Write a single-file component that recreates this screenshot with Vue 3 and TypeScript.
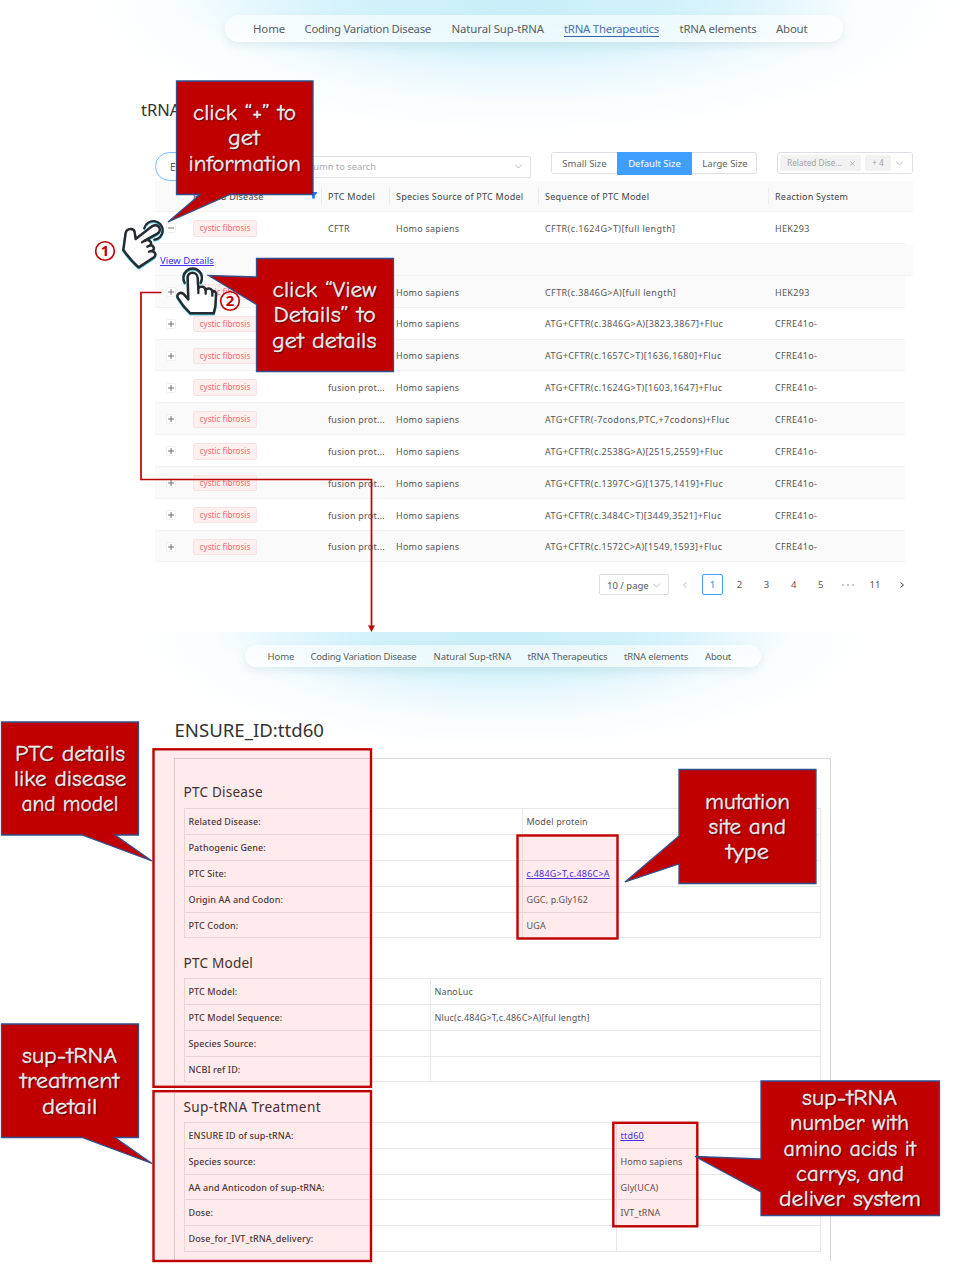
<script setup lang="ts">
interface Row { model: string; sequence: string; system: string }
interface Line { text: string; x: number; y: number; w: number }
interface Callout { shape: string; lines: Line[] }
interface Detail { label: string; value: string; link?: boolean }
interface Section { title: string; kind: string; rows: Detail[] }

const nav = ['Home', 'Coding Variation Disease', 'Natural Sup-tRNA', 'tRNA Therapeutics', 'tRNA elements', 'About']
const navKeys = ['home', 'coding', 'natural', 'therapy', 'elements', 'about']

const rows: Row[] = [
  { model: 'CFTR', sequence: 'CFTR(c.1624G>T)[full length]', system: 'HEK293' },
  { model: '', sequence: 'CFTR(c.3846G>A)[full length]', system: 'HEK293' },
  { model: '', sequence: 'ATG+CFTR(c.3846G>A)[3823,3867]+Fluc', system: 'CFRE41o-' },
  { model: '', sequence: 'ATG+CFTR(c.1657C>T)[1636,1680]+Fluc', system: 'CFRE41o-' },
  { model: 'fusion prot...', sequence: 'ATG+CFTR(c.1624G>T)[1603,1647]+Fluc', system: 'CFRE41o-' },
  { model: 'fusion prot...', sequence: 'ATG+CFTR(-7codons,PTC,+7codons)+Fluc', system: 'CFRE41o-' },
  { model: 'fusion prot...', sequence: 'ATG+CFTR(c.2538G>A)[2515,2559]+Fluc', system: 'CFRE41o-' },
  { model: 'fusion prot...', sequence: 'ATG+CFTR(c.1397C>G)[1375,1419]+Fluc', system: 'CFRE41o-' },
  { model: 'fusion prot...', sequence: 'ATG+CFTR(c.3484C>T)[3449,3521]+Fluc', system: 'CFRE41o-' },
  { model: 'fusion prot...', sequence: 'ATG+CFTR(c.1572C>A)[1549,1593]+Fluc', system: 'CFRE41o-' },
]

const sections: Section[] = [
  {
    title: 'PTC Disease', kind: 'disease', rows: [
      { label: 'Related Disease:', value: 'Model protein' },
      { label: 'Pathogenic Gene:', value: '' },
      { label: 'PTC Site:', value: 'c.484G>T,c.486C>A', link: true },
      { label: 'Origin AA and Codon:', value: 'GGC, p.Gly162' },
      { label: 'PTC Codon:', value: 'UGA' },
    ],
  },
  {
    title: 'PTC Model', kind: 'model', rows: [
      { label: 'PTC Model:', value: 'NanoLuc' },
      { label: 'PTC Model Sequence:', value: 'Nluc(c.484G>T,c.486C>A)[ful length]' },
      { label: 'Species Source:', value: '' },
      { label: 'NCBI ref ID:', value: '' },
    ],
  },
  {
    title: 'Sup-tRNA Treatment', kind: 'treatment', rows: [
      { label: 'ENSURE ID of sup-tRNA:', value: 'ttd60', link: true },
      { label: 'Species source:', value: 'Homo sapiens' },
      { label: 'AA and Anticodon of sup-tRNA:', value: 'Gly(UCA)' },
      { label: 'Dose:', value: 'IVT_tRNA' },
      { label: 'Dose_for_IVT_tRNA_delivery:', value: '' },
    ],
  },
]

const callouts: Callout[] = [
  {
    shape: 'M176.5 81H313V194.500H230L168 222L200 194.500H176.500Z',
    lines: [
      { text: 'click “+” to', x: 193, y: 120, w: 103 },
      { text: 'get', x: 228, y: 145, w: 32 },
      { text: 'information', x: 188.500, y: 170.500, w: 112.500 },
    ],
  },
  {
    shape: 'M256.500 258.500H393.500V371.500H256.500V304.500L208.500 275.500L256.500 277Z',
    lines: [
      { text: 'click “View', x: 272.500, y: 297, w: 104 },
      { text: 'Details” to', x: 273.500, y: 322, w: 102.500 },
      { text: 'get details', x: 272, y: 347.500, w: 104.500 },
    ],
  },
  {
    shape: 'M1.500 722H138.500V835H115L152 861L82 835H1.500Z',
    lines: [
      { text: 'PTC details', x: 15, y: 760.500, w: 110 },
      { text: 'like disease', x: 14, y: 786, w: 112.500 },
      { text: 'and model', x: 21.500, y: 811, w: 97 },
    ],
  },
  {
    shape: 'M679 769.500H816V883.500H679V864L625 882L679 836Z',
    lines: [
      { text: 'mutation', x: 705, y: 809, w: 85 },
      { text: 'site and', x: 708.500, y: 834, w: 77.500 },
      { text: 'type', x: 726, y: 859, w: 43 },
    ],
  },
  {
    shape: 'M1.500 1024H138.500V1137.500H115L152 1163.500L82 1137.500H1.500Z',
    lines: [
      { text: 'sup-tRNA', x: 22, y: 1063, w: 95 },
      { text: 'treatment', x: 20, y: 1088, w: 99.500 },
      { text: 'detail', x: 42, y: 1113.500, w: 55.500 },
    ],
  },
  {
    shape: 'M761 1081H939.500V1215.500H761V1192L695 1156.500L761 1159Z',
    lines: [
      { text: 'sup-tRNA', x: 802, y: 1105, w: 95 },
      { text: 'number with', x: 790, y: 1130, w: 119 },
      { text: 'amino acids it', x: 783.500, y: 1155.500, w: 132.500 },
      { text: 'carrys, and', x: 796, y: 1180.500, w: 108 },
      { text: 'deliver system', x: 779, y: 1206, w: 142 },
    ],
  },
]
const pages = ['2', '3', '4', '5']
</script>

<template>
  <main class="board">
    <section class="page list-page">
      <nav class="nav">
        <a v-for="(item, i) in nav" :key="item" :class="[navKeys[i], { active: i === 3 }]">{{ item }}</a>
      </nav>
      <h1>tRNA</h1>
      <div class="toolbar">
        <button class="export">Ex</button>
        <div class="search">
          <span>Select column to search</span>
          <svg class="chev" viewBox="0 0 10 10"><path d="M1.500 3L5 6.800L8.500 3" /></svg>
        </div>
        <div class="sizes"><span>Small Size</span><span class="on">Default Size</span><span>Large Size</span></div>
        <div class="filter">
          <span class="chip wide">Related Dise...<svg viewBox="0 0 8 8"><path d="M1.500 1.500L6.500 6.500M6.500 1.500L1.500 6.500" /></svg></span>
          <span class="chip">+ 4</span>
          <svg class="chev" viewBox="0 0 10 10"><path d="M1.500 3L5 6.800L8.500 3" /></svg>
        </div>
      </div>

      <div class="grid head">
        <span></span>
        <span class="cell first">Related Disease<svg viewBox="0 0 8 8"><path d="M0 0H8V1.500L5.500 4V7.500H2.500V4L0 1.500Z" /></svg></span>
        <span class="cell">PTC Model</span>
        <span class="cell">Species Source of PTC Model</span>
        <span class="cell">Sequence of PTC Model</span>
        <span class="cell last">Reaction System</span>
      </div>
      <template v-for="(r, i) in rows" :key="i">
        <div class="grid row" :class="{ striped: i % 2 === 1 }">
          <span class="toggle"><svg viewBox="0 0 10 10"><path :d="i === 0 ? 'M2 5H8' : 'M2 5H8M5 2V8'" /></svg></span>
          <span><b class="tag">cystic fibrosis</b></span>
          <span class="model">{{ r.model }}</span>
          <span class="species">Homo sapiens</span>
          <span class="seq">{{ r.sequence }}</span>
          <span class="system">{{ r.system }}</span>
        </div>
        <div v-if="i === 0" class="expanded"><a>View Details</a></div>
      </template>

      <div class="pager">
        <span class="per">10 / page<svg class="chev" viewBox="0 0 10 10"><path d="M1.500 3L5 6.800L8.500 3" /></svg></span>
        <span class="item muted"><svg viewBox="0 0 8 8"><path d="M5.500 1.500L2.500 4L5.500 6.500" /></svg></span>
        <span class="item current">1</span>
        <span v-for="p in pages" :key="p" class="item">{{ p }}</span>
        <span class="item muted dots"><i></i><i></i><i></i></span>
        <span class="item">11</span>
        <span class="item"><svg viewBox="0 0 8 8"><path d="M2.500 1.500L5.500 4L2.500 6.500" /></svg></span>
      </div>
    </section>

    <section class="page detail-page">
      <nav class="nav small">
        <a v-for="(item, i) in nav" :key="item" :class="navKeys[i]">{{ item }}</a>
      </nav>
      <h2>ENSURE_ID:ttd60</h2>
      <div class="panel">
        <article v-for="s in sections" :key="s.title" :class="s.kind">
          <h3>{{ s.title }}</h3>
          <dl>
            <div v-for="d in s.rows" :key="d.label">
              <dt>{{ d.label }}</dt>
              <dd><a v-if="d.link">{{ d.value }}</a><template v-else>{{ d.value }}</template></dd>
            </div>
          </dl>
        </article>
      </div>
    </section>

    <svg class="notes" viewBox="0 0 978 1276" width="978" height="1276">
      <g class="marks">
        <rect x="153.500" y="749.300" width="217.500" height="337.500" />
        <rect x="153.500" y="1091.200" width="217.500" height="169.800" />
        <rect x="517.500" y="835.500" width="100" height="103" />
        <rect x="613.300" y="1122.800" width="84" height="103.500" />
      </g>
      <path class="wire" d="M161.500 292.500H141V479.500H371.500V627" />
      <path class="arrow" d="M368 625.500H375L371.500 632Z" />
      <g v-for="(c, i) in callouts" :key="i">
        <path class="bubble" :d="c.shape" />
        <text v-for="l in c.lines" :key="l.text" :x="l.x" :y="l.y" :textLength="l.w" lengthAdjust="spacingAndGlyphs">{{ l.text }}</text>
      </g>
      <g class="hand" transform="translate(90 190) scale(.33333)">
        <path class="ring" d="M163 114A28 28 0 1 1 193 149" />
        <path class="palm" d="M137 147L186 109C206 97 218 121 202 131L164 152C176 146 188 156 181 166C191 166 196 178 186 183C196 186 199 194 193 201L146 232Q123 212 100 180L107 129C110 113 133 113 134 127Z" />
        <path class="ink" d="M164 152L156 157M181 166L172 170M186 183L177 185" />
      </g>
      <g class="hand" transform="translate(90 190) scale(.33333)">
        <path class="ring" d="M284 278A28 28 0 1 1 332 278" />
        <path class="palm" d="M295 328L293 264C292 243 322 243 323 264L325 295C331 287 345 289 347 300C353 292 366 295 367 306C373 300 379 306 378 315L376 350L371 370H301Q279 350 263 323C259 312 271 305 280 311Z" />
        <path class="ink" d="M325 295V309M347 300V311M367 306V317" />
      </g>
      <g class="step">
        <circle cx="105" cy="251" r="9.300" /><text x="105" y="256.300">1</text>
        <circle cx="230" cy="301" r="9.300" /><text x="230" y="306.300">2</text>
      </g>
    </svg>
  </main>
</template>

<style>
body { margin: 0; background: #fff; }
</style>

<style scoped>
* { box-sizing: border-box; }
.board { position: relative; width: 978px; height: 1276px; overflow: hidden; background: #fff; font-family: "Noto Sans", "Open Sans", sans-serif; color: #555; font-size: 9px; }
.page { display: flow-root; }
.list-page { height: 632px; background: radial-gradient(ellipse 340px 70px at 510px 0, rgba(200, 237, 249, .75) 0, rgba(204, 240, 250, .6) 45%, rgba(215, 243, 251, 0) 100%) no-repeat, radial-gradient(ellipse 440px 136px at 525px 0, #cdf0f9 0, #d6f3fb 30%, #e8f8fd 52%, #f8fdfe 75%, #fff 100%) no-repeat; }
.nav { display: grid; grid-template-columns: 51.500px 147px 112.500px 115.500px 96.500px auto; width: 618px; height: 26.500px; margin: 15px 0 0 225px; padding: 1.500px 0 0 28px; border-radius: 14px; background: rgba(255, 255, 255, .6); box-shadow: 0 4px 9px rgba(80, 120, 130, .11); align-items: center; font-size: 11.400px; letter-spacing: -.2px; color: #555f62; white-space: nowrap; }
.nav a { justify-self: start; line-height: 14px; }
.nav .coding { letter-spacing: -.29px; }
.nav .natural, .nav .home { letter-spacing: -.1px; }
.nav .active { color: #4a73b0; letter-spacing: -.25px; box-shadow: 0 1px #3564a8; }
h1 { margin: 57.500px 0 0 141px; font-size: 16.500px; line-height: 22px; font-weight: 400; color: #333; }
.toolbar { position: relative; display: flex; height: 29px; margin: 31px 0 0 155px; align-items: flex-start; white-space: nowrap; }
.export { width: 70px; height: 29px; border: 1px solid #79bbff; border-radius: 15px; padding: 0 0 0 14px; text-align: left; font: 10px "Noto Sans", sans-serif; color: #555; background: #fff; }
.search { display: flex; align-items: center; justify-content: space-between; width: 286px; height: 21.500px; margin: 4px 0 0 20px; padding: 0 7px 0 20px; border: 1px solid #dcdfe6; border-radius: 2px; color: #a8abb2; background: #fff; font-size: 9.300px; }
.search span { width: 110px; display: flex; justify-content: flex-end; }
.chev { width: 9px; height: 9px; fill: none; stroke: #b5b8be; stroke-width: 1; }
.sizes { display: grid; grid-template-columns: 65px 75px 66px; width: 206px; height: 22px; margin-left: 20px; border: 1px solid #dcdfe6; border-radius: 3px; background: #fff; font-size: 9.500px; line-height: 21px; text-align: center; color: #606266; }
.sizes .on { margin: -1px 0; line-height: 23px; background: #409eff; color: #fff; }
.filter { display: flex; align-items: center; width: 136px; height: 22px; margin-left: 20px; padding-left: 2px; border: 1px solid #dcdfe6; border-radius: 3px; background: #fff; }
.chip { height: 16px; width: 26px; margin-right: 4px; border-radius: 2px; background: #f2f2f3; color: #a0a2a6; font-size: 8.300px; line-height: 16px; text-align: center; }
.chip.wide { display: flex; width: 81px; padding: 0 5px 0 7px; justify-content: space-between; align-items: center; }
.chip svg { width: 7px; height: 7px; stroke: #aaa; fill: none; }
.grid { display: grid; grid-template-columns: 38px 135px 68px 149px 230px 130px; width: 750px; margin-left: 155px; align-items: center; font-size: 9px; letter-spacing: .24px; white-space: nowrap; }
.head { width: 758px; height: 31.200px; background: #fafafa; border-bottom: 1px solid #f3f3f3; color: #444; }
.head .cell { position: relative; }
.head .cell:not(.last)::after { content: ""; position: absolute; right: 6px; top: -2px; width: 1px; height: 16px; background: #ebebeb; }
.first svg { position: absolute; right: 11.500px; top: 2.500px; width: 7px; height: 7px; fill: #1677ff; }
.row { height: 31.850px; padding-top: 1.600px; border-bottom: 1px solid #f2f2f2; }
.seq { letter-spacing: .4px; }
.system { letter-spacing: .32px; }
.striped { background: #fafafa; }
.toggle { display: flex; width: 10px; height: 10px; margin-left: 11px; border: 1px solid #f0f0f0; border-radius: 2px; background: #fff; }
.toggle svg { width: 10px; height: 10px; margin: -1px; overflow: visible; stroke: #666; stroke-width: .9; }
.tag { display: block; width: 64px; height: 16.500px; border: 1px solid #fde2e2; border-radius: 2px; background: #fef0f0; color: #f56c6c; font-size: 8.100px; font-weight: 400; letter-spacing: 0; line-height: 14.500px; text-align: center; }
.expanded { width: 758px; height: 31.850px; margin-left: 155px; padding-left: 5px; background: #fafafa; border-bottom: 1px solid #f3f3f3; font-size: 9.500px; line-height: 33px; }
a { text-decoration: none; }
.expanded a, dd a { color: #3a30ee; text-decoration: underline; }
.pager { display: flex; height: 21.500px; margin: 11.500px 0 0 599px; gap: 5.500px; align-items: center; font-size: 9.500px; color: #555; white-space: nowrap; }
.per { display: flex; width: 70px; height: 21.500px; padding: 1px 7px 0; border: 1px solid #ddd; border-radius: 2px; align-items: center; justify-content: space-between; }
.item { display: flex; width: 21.600px; height: 21.500px; flex: none; align-items: center; justify-content: center; }
.item svg { width: 8px; height: 8px; fill: none; stroke: #444; }
.muted svg { stroke: #bbb; }
.current { border: 1px solid #409eff; border-radius: 2px; color: #409eff; font-weight: 500; }
.dots { gap: 3px; }
.dots i { width: 2px; height: 2px; border-radius: 50%; background: #bbb; }
.detail-page { height: 644px; background: radial-gradient(ellipse 290px 60px at 500px 0, rgba(200, 237, 249, .75) 0, rgba(204, 240, 250, .6) 45%, rgba(215, 243, 251, 0) 100%) no-repeat, radial-gradient(ellipse 370px 118px at 505px 0, #cdf0f9 0, #d6f3fb 30%, #e8f8fd 52%, #f8fdfe 75%, #fff 100%) no-repeat; }
.small { width: 516px; height: 22px; margin: 13px 0 0 245px; padding: 2px 0 0 22.500px; font-size: 9.500px; letter-spacing: -.17px; grid-template-columns: 43px 123px 94px 96.500px 81px auto; }
.small .coding { letter-spacing: -.22px; }
.small .natural, .small .home { letter-spacing: -.05px; }
h2 { margin: 49px 0 0 174.500px; font-size: 18.600px; line-height: 28px; font-weight: 400; color: #333; }
.panel { width: 657px; height: 503.500px; margin: 13.500px 0 0 174px; padding: 21.500px 9px 0 8.500px; border: 1px solid #d8d8d8; border-bottom: 0; }
h3 { margin: 0; height: 28.200px; font-size: 13.600px; letter-spacing: .2px; line-height: 23px; font-weight: 400; color: #333; }
dl { margin: 0; border: 1px solid #e8e8e8; border-bottom: 0; }
dl div { display: grid; grid-template-columns: 337px 1fr; height: 25.850px; border-bottom: 1px solid #e8e8e8; line-height: 25px; }
dt { padding-left: 4px; color: #3c3c3c; font-weight: 500; letter-spacing: .1px; }
dd { margin: 0; padding-left: 4px; border-left: 1px solid #e8e8e8; color: #555; letter-spacing: .13px; }
dd a { letter-spacing: .22px; }
article.model, article.treatment { padding-top: 12.500px; }
article.model h3, article.treatment h3 { height: 27.200px; }
article.treatment h3 { letter-spacing: .38px; }
article.model dl div { grid-template-columns: 245px 1fr; }
article.treatment dl div { grid-template-columns: 431px 1fr; height: 25.750px; }
.notes { position: absolute; inset: 0; pointer-events: none; }
.marks rect { fill: rgba(255, 0, 0, .08); stroke: #c00000; stroke-width: 2.400; }
.wire { fill: none; stroke: #c00000; stroke-width: 1.700; }
.arrow { fill: #c00000; }
.bubble { fill: #c00000; stroke: #2f528f; stroke-width: 1.300; }
.notes text { fill: #fff; stroke: #fff; stroke-width: .3; font: 500 22.500px "Comic Sans MS", "Comic Neue", Lato, sans-serif; text-shadow: 1px 1px 1px rgba(0, 0, 0, .5); }
.hand { filter: drop-shadow(0 3px 1px #54c8dc); }
.palm { fill: #fff; stroke: #252b31; stroke-width: 7.500; stroke-linejoin: round; }
.ring, .ink { fill: none; stroke: #252b31; stroke-width: 7; stroke-linecap: round; }
.step circle { fill: rgba(255, 255, 255, .5); stroke: #c00000; stroke-width: 1.600; }
.step text { fill: #c00000; stroke: none; font: 700 15px "Noto Sans", sans-serif; text-anchor: middle; text-shadow: none; }
</style>
